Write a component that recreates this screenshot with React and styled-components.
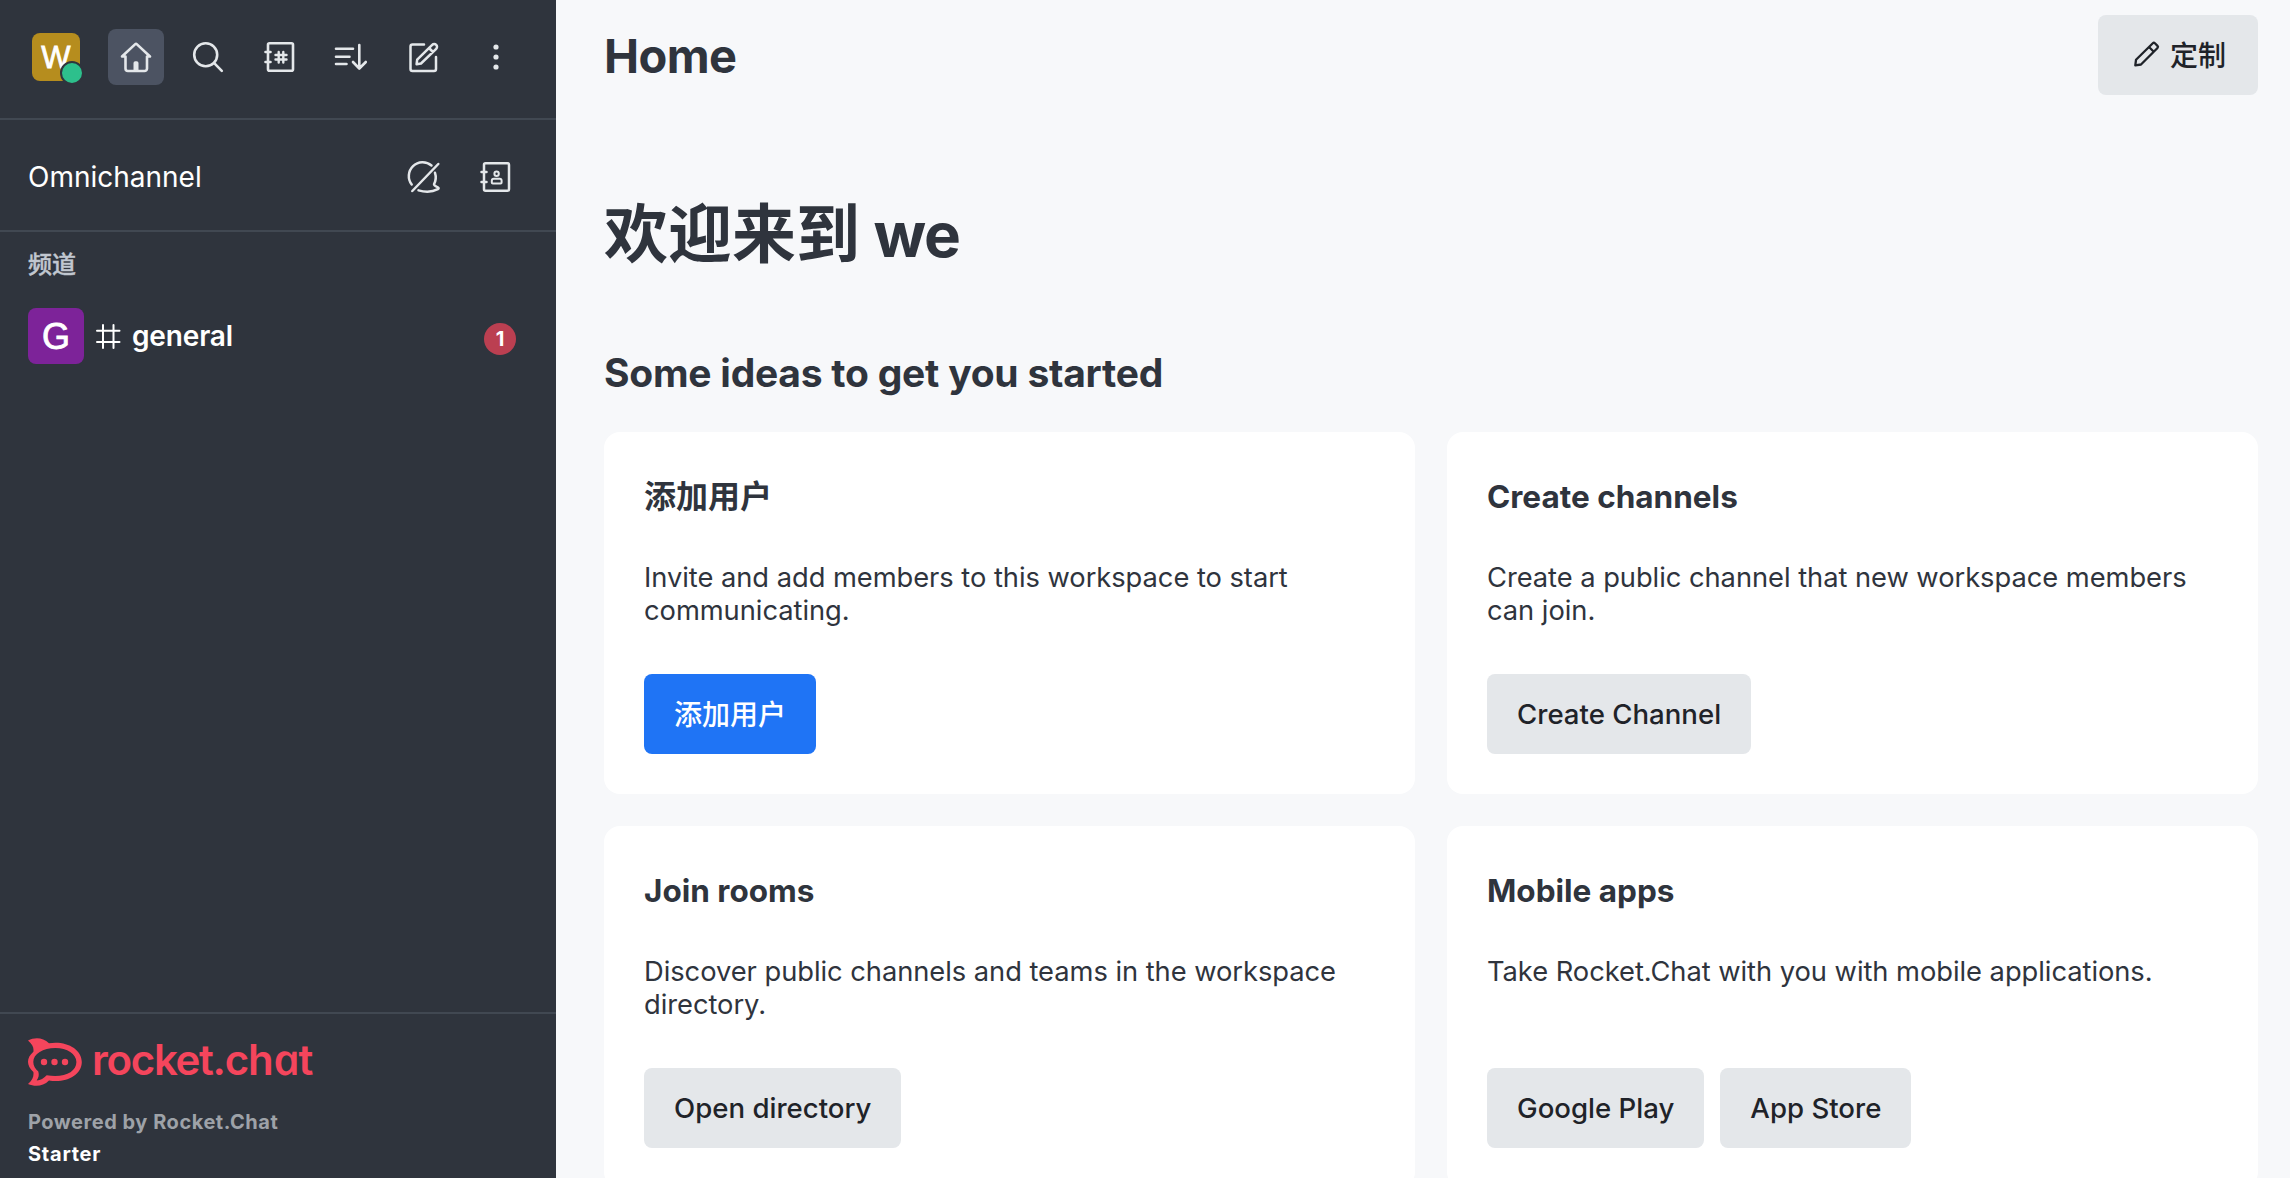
import React from 'react';
import styled, { createGlobalStyle } from 'styled-components';

const Global = createGlobalStyle`
  * { box-sizing: border-box; }
  html, body { margin: 0; height: 100%; overflow: hidden; }
  #root { height: 100vh; }
  body {
    font-family: Inter, "Noto Sans CJK SC", "Liberation Sans", sans-serif;
    color: #2f343d;
    font-size: 28px;
  }
  button { font-family: inherit; border: 0; margin: 0; }
  h1, h2, h3, p { margin: 0; }
`;

const Page = styled.div`
  display: flex;
  height: 100vh;
  background: #f7f8fa;
`;

const Sidebar = styled.aside`
  width: 556px;
  flex: none;
  display: flex;
  flex-direction: column;
  background: #2f343d;
  color: #fff;
`;

const Toolbar = styled.header`
  display: flex;
  align-items: center;
  justify-content: space-between;
  height: 120px;
  padding: 0 32px 4px;
  border-bottom: 2px solid #414852;
`;

const IconRow = styled.div`
  display: flex;
  gap: 16px;
`;

const IconButton = styled.button`
  width: 56px;
  height: 56px;
  padding: 8px;
  border-radius: 8px;
  color: #e4e7ea;
  background: ${(p) => (p.$pressed ? '#4c5362' : 'transparent')};
  svg { display: block; }
`;

const Avatar = styled.div`
  position: relative;
  display: flex;
  align-items: center;
  justify-content: center;
  flex: none;
  width: ${(p) => p.$size}px;
  height: ${(p) => p.$size}px;
  padding-top: 2px;
  border-radius: 8px;
  background: ${(p) => p.$color};
  font-family: "Liberation Sans", Arial, sans-serif;
  font-size: ${(p) => p.$font}px;
  font-weight: 400;
  -webkit-text-stroke: 0.8px #fff;
  color: #fff;
`;

const Status = styled.span`
  position: absolute;
  right: -4px;
  bottom: -4px;
  width: 24px;
  height: 24px;
  border: 2px solid #2f343d;
  border-radius: 50%;
  background: #2dc08c;
`;

const Omnichannel = styled.section`
  display: flex;
  align-items: center;
  justify-content: space-between;
  height: 112px;
  padding: 4px 32px 0 28px;
  border-bottom: 2px solid #414852;
`;

const RoomList = styled.nav`
  flex: 1;
`;

const GroupTitle = styled.div`
  height: 64px;
  padding: 1px 0 0 28px;
  line-height: 64px;
  font-size: 24px;
  font-weight: 500;
  -webkit-text-stroke: 0.4px currentColor;
  color: #c1c7d0;
`;

const Room = styled.div`
  display: flex;
  align-items: center;
  height: 80px;
  padding: 0 40px 0 28px;
  font-weight: 600;
  > svg { margin: 0 4px; }
`;

const RoomName = styled.span`
  flex: 1;
  letter-spacing: -0.15px;
`;

const Badge = styled.span`
  width: 32px;
  height: 32px;
  margin-top: 6px;
  border-radius: 50%;
  background: #bb3f51;
  font-size: 20px;
  font-weight: 700;
  line-height: 32px;
  text-align: center;
`;

const Footer = styled.footer`
  height: 166px;
  border-top: 2px solid #414852;
  padding: 24px 28px 0;
`;

const Brand = styled.div`
  display: flex;
  align-items: center;
  height: 48px;
  color: #f5455c;
  svg { flex: none; }
`;

const Wordmark = styled.span`
  margin: -5px 0 0 10px;
  font-size: 42px;
  font-weight: 600;
  line-height: 48px;
  letter-spacing: -1.3px;
  white-space: nowrap;
`;

/* Upright single-storey "a" taken from the italic cut. */
const RoundA = styled.span`
  display: inline-block;
  margin: 0 1.5px 0 1px;
  font-family: "Open Sans", sans-serif;
  font-size: 43px;
  font-style: italic;
  font-weight: 600;
  line-height: 1;
  transform: scaleX(1.08) skewX(12deg);
`;

const Powered = styled.p`
  margin-top: 20px;
  font-size: 20px;
  line-height: 32px;
  font-weight: 700;
  letter-spacing: 0.53px;
  color: #9ea2a8;
`;

const Plan = styled(Powered)`
  margin-top: 0;
  letter-spacing: 0.75px;
  color: #fff;
`;

const Main = styled.main`
  flex: 1;
  min-width: 0;
  padding: 0 32px 0 48px;
`;

const TopBar = styled.div`
  display: flex;
  align-items: center;
  justify-content: space-between;
  height: 112px;
  padding-bottom: 2px;
`;

const PageTitle = styled.h1`
  font-size: 47px;
  font-weight: 700;
  letter-spacing: -0.6px;
`;

const Welcome = styled.h2`
  height: 84px;
  margin-top: 80px;
  font-size: 64px;
  line-height: 84px;
  font-weight: 700;
`;

const WorkspaceName = styled.span`
  font-size: 62px;
  line-height: 1;
  letter-spacing: -1.3px;
`;

const Ideas = styled.h2`
  margin-top: 72px;
  font-size: 39px;
  line-height: 50px;
  font-weight: 700;
  letter-spacing: -0.24px;
`;

const Grid = styled.div`
  display: grid;
  grid-template-columns: 1fr 1fr;
  gap: 32px;
  margin-top: 34px;
`;

const CardBox = styled.article`
  display: flex;
  flex-direction: column;
  height: 362px;
  padding: 40px;
  border-radius: 16px;
  background: #fff;
`;

const CardTitle = styled.h3`
  height: 48px;
  padding-top: 1px;
  line-height: 48px;
  font-size: 31.5px;
  font-weight: 700;
  &:lang(zh) { font-size: 32px; }
`;

const CardText = styled.p`
  flex: 1;
  margin-top: 41px;
  font-size: 27.3px;
  line-height: 33.3px;
  letter-spacing: -0.04px;
`;

const Buttons = styled.div`
  display: flex;
  gap: 16px;
`;

const Button = styled.button`
  display: flex;
  align-items: center;
  height: 80px;
  padding: 0 30px;
  border-radius: 8px;
  font-size: 27.6px;
  font-weight: 500;
  background: ${(p) => (p.$primary ? '#1f74f5' : '#e4e7ea')};
  color: ${(p) => (p.$primary ? '#fff' : '#1f2329')};
  svg { margin: 0 8px 0 2px; }
  &:lang(zh) {
    padding-right: ${(p) => (p.$icon ? 32 : 30)}px;
    padding-bottom: 2px;
    font-size: 28px;
  }
`;

const Svg = ({ size = 40, w = 2.6, view = 40, children }) => (
  <svg width={size} height={size} viewBox={`0 0 ${view} ${view}`} fill="none" stroke="currentColor" strokeWidth={w} strokeLinecap="round" strokeLinejoin="round">
    {children}
  </svg>
);

const HomeIcon = () => (
  <Svg>
    <path d="M6 19.5 19 7.4a1.5 1.5 0 0 1 2 0L34 19.5H31V31.500a2.500 2.500 0 0 1-2.500 2.500H12a2.500 2.500 0 0 1-2.500-2.500V19.500Z" />
    <path d="M17.500 33.500V26a1.800 1.800 0 0 1 1.800-1.800h1.400a1.800 1.800 0 0 1 1.800 1.800V33.500Z" fill="currentColor" stroke="none" />
  </Svg>
);
const SearchIcon = () => (
  <Svg>
    <circle cx="17.700" cy="17.700" r="11.500" />
    <path d="m26.200 26.200 7.600 7.600" />
  </Svg>
);
const NotebookFrame = () => (
  <>
    <rect x="8" y="6.300" width="25" height="27.400" rx="1.500" />
    <path d="M5.500 15H10.500M5.500 25H10.500" />
  </>
);
const DirectoryIcon = () => (
  <Svg>
    <NotebookFrame />
    <path strokeWidth="2.400" d="M18.700 15v10.500M23.300 15v10.500M15.500 18h11M15.500 22.500h11" />
  </Svg>
);
const ContactsIcon = () => (
  <Svg w={2.500}>
    <NotebookFrame />
    <g strokeWidth="2">
      <circle cx="20.600" cy="16.800" r="2.200" />
      <path d="M17.800 21.800h5.800a2 2 0 0 1 2 2v1.700a1 1 0 0 1-1 1h-7.800a1 1 0 0 1-1-1v-1.700a2 2 0 0 1 2-2Z" />
    </g>
  </Svg>
);
const SortIcon = () => (
  <Svg>
    <path d="M4 11.800H21M4 19.700H17.500M4 27H14.500M27.300 8v23M21 25l6.300 6.500 6.500-6.500" />
  </Svg>
);
const EditIcon = () => (
  <Svg w={2.500}>
    <path d="M20 7.500H8.500a2 2 0 0 0-2 2V32a2 2 0 0 0 2 2H30a2 2 0 0 0 2-2V20" />
    <path d="M12.600 27.200 13.200 22.600 28.200 7.800a2.800 2.800 0 0 1 4 0 2.800 2.800 0 0 1 0 4L17 26.500ZM25 11l4 4" />
  </Svg>
);
const KebabIcon = () => (
  <Svg>
    <g fill="currentColor" stroke="none">
      <circle cx="20" cy="10" r="2.600" />
      <circle cx="20" cy="20" r="2.600" />
      <circle cx="20" cy="30" r="2.600" />
    </g>
  </Svg>
);
const BalloonOffIcon = () => (
  <Svg w={2.500}>
    <path d="M27.500 8.500A13.800 13.800 0 0 0 7.700 27.500" />
    <path d="M33 15.500c1.300 4 1 7.500-.9 11.200-.4 1 .3 1.500 4 3.500.8.500.6 1.300-.2 1.700-4.900 2.500-13 2.900-19.400 1.200" transform="translate(-2 .3)" />
    <path d="M8.300 34 34.300 7" />
  </Svg>
);
const HashIcon = () => (
  <Svg w={2}>
    <path d="M15 9v23M25.500 9v23M9 14.800h22.500M9 26h22.500" />
  </Svg>
);
const PencilIcon = () => (
  <Svg size={32} view={32} w={2.300}>
    <path d="M5.300 27.300 6 21.800 22.800 5.300a1.500 1.500 0 0 1 2.100 0l2.600 2.600a1.500 1.500 0 0 1 0 2.100L11 26.500ZM19 9l4.800 4.800" />
  </Svg>
);
const Logo = () => (
  <svg width="54" height="48" viewBox="0 0 54 48">
    <path fill="currentColor" d="M0 2.500C7 -1 15 -.5 21 5.300 38 2.500 53.800 11 53.800 24S38 45.500 21 42.500C15 48.500 7 49 0 46c4.500-4 6-7.500 5.400-12C-1.800 27.500-1.800 20 5.400 13.800 6 9.500 4.500 6.500 0 2.500Z" />
    <path fill="#2f343d" d="M27.500 10C15 10 5.300 15.800 5.300 24c0 4 2 6.800 5 9.500 1 3.500.4 6-1.600 9 4-.3 7-2 10-5.200 17 3.200 29.700-3.400 29.700-13.300C48.400 16 39 10 27.500 10Z" />
    <g fill="currentColor">
      <circle cx="16" cy="24" r="3.200" />
      <circle cx="26.500" cy="24" r="3.200" />
      <circle cx="37" cy="24" r="3.200" />
    </g>
  </svg>
);

const cards = [
  { title: '添加用户', lang: 'zh', text: 'Invite and add members to this workspace to start communicating.', buttons: ['添加用户'], primary: true },
  { title: 'Create channels', text: 'Create a public channel that new workspace members can join.', buttons: ['Create Channel'] },
  { title: 'Join rooms', text: 'Discover public channels and teams in the workspace directory.', buttons: ['Open directory'] },
  { title: 'Mobile apps', text: 'Take Rocket.Chat with you with mobile applications.', buttons: ['Google Play', 'App Store'] },
];

const Card = ({ title, text, buttons, primary, lang = 'en' }) => (
  <CardBox>
    <CardTitle lang={lang}>{title}</CardTitle>
    <CardText>{text}</CardText>
    <Buttons>
      {buttons.map((b) => (
        <Button key={b} lang={lang} $primary={primary}>{b}</Button>
      ))}
    </Buttons>
  </CardBox>
);

export default function App() {
  return (
    <Page>
      <Global />
      <Sidebar>
        <Toolbar>
          <Avatar $size={48} $font={31} $color="#b68d1e">
            W
            <Status />
          </Avatar>
          <IconRow>
            <IconButton $pressed><HomeIcon /></IconButton>
            <IconButton><SearchIcon /></IconButton>
            <IconButton><DirectoryIcon /></IconButton>
            <IconButton><SortIcon /></IconButton>
            <IconButton><EditIcon /></IconButton>
            <IconButton><KebabIcon /></IconButton>
          </IconRow>
        </Toolbar>
        <Omnichannel>
          <span>Omnichannel</span>
          <IconRow>
            <IconButton><BalloonOffIcon /></IconButton>
            <IconButton><ContactsIcon /></IconButton>
          </IconRow>
        </Omnichannel>
        <RoomList>
          <GroupTitle>频道</GroupTitle>
          <Room>
            <Avatar $size={56} $font={36} $color="#7d2399">G</Avatar>
            <HashIcon />
            <RoomName>general</RoomName>
            <Badge>1</Badge>
          </Room>
        </RoomList>
        <Footer>
          <Brand>
            <Logo />
            <Wordmark>rocket.ch<RoundA>a</RoundA>t</Wordmark>
          </Brand>
          <Powered>Powered by Rocket.Chat</Powered>
          <Plan>Starter</Plan>
        </Footer>
      </Sidebar>
      <Main>
        <TopBar>
          <PageTitle>Home</PageTitle>
          <Button lang="zh" $icon><PencilIcon />定制</Button>
        </TopBar>
        <Welcome>欢迎来到<WorkspaceName> we</WorkspaceName></Welcome>
        <Ideas>Some ideas to get you started</Ideas>
        <Grid>
          {cards.map((c) => <Card key={c.title} {...c} />)}
        </Grid>
      </Main>
    </Page>
  );
}
